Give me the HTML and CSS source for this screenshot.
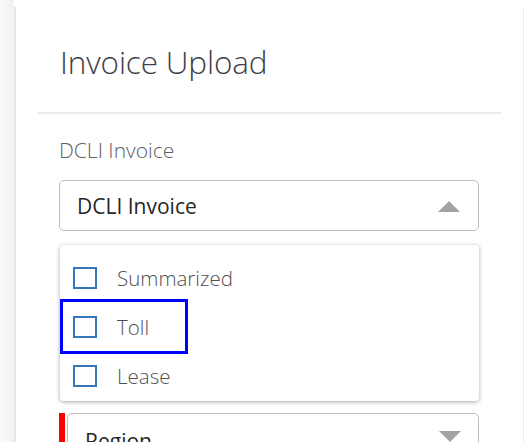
FILE: index.html
```html
<!DOCTYPE html>
<html lang="en">
<head>
<meta charset="utf-8">
<title>Invoice Upload</title>
<link rel="stylesheet" href="styles.css">
</head>
<body>
<div class="panel">
  <div class="header">
    <h1 class="title">Invoice Upload</h1>
  </div>
  <div class="divider"></div>
  <div class="content">
    <div class="field-label">DCLI Invoice</div>
    <div class="select open">
      <span class="select-value">DCLI Invoice</span>
      <span class="caret caret-up"></span>
    </div>
    <div class="dropdown">
      <label class="option"><span class="box"></span><span class="option-text">Summarized</span></label>
      <label class="option focused"><span class="box"></span><span class="option-text">Toll</span></label>
      <label class="option"><span class="box"></span><span class="option-text">Lease</span></label>
    </div>
    <div class="required">
      <div class="select region">
        <span class="select-value">Region</span>
        <span class="caret caret-down"></span>
      </div>
    </div>
  </div>
</div>
</body>
</html>
```

FILE: styles.css
```css
html, body {
  margin: 0;
  padding: 0;
  height: 100%;
  overflow: hidden;
}

body {
  background: linear-gradient(to right, #fbfbfb 0, #f1f1f1 13px, #ffffff 14px);
  font-family: "Open Sans", "Noto Sans", sans-serif;
  padding: 7px 0 0 14px;
  box-sizing: border-box;
}

.panel {
  width: 510px;
  height: 600px;
  background: #ffffff;
  border-left: 2px solid #e6e6e6;
  border-right: 1px solid #ececec;
  box-sizing: border-box;
}

.header {
  padding: 35px 0 0 44px;
  height: 105px;
  box-sizing: border-box;
}

.title {
  margin: 0;
  font-weight: 300;
  font-size: 31.5px;
  line-height: 40px;
  color: #3f3f4a;
  letter-spacing: -0.15px;
}

.divider {
  height: 2px;
  margin: 0 22px 0 21px;
  background: #ebebeb;
}

.content {
  padding: 24px 44px 0 43px;
}

.field-label {
  font-size: 21px;
  font-weight: 300;
  line-height: 24px;
  color: #606060;
  margin-bottom: 18px;
}

.select {
  position: relative;
  height: 51px;
  border: 1px solid #bfbfbf;
  border-radius: 5px;
  box-sizing: border-box;
  display: flex;
  align-items: center;
  padding: 0 17px;
  background: #fff;
}

.select-value {
  font-size: 21px;
  color: #262626;
  flex: 1;
}

.caret {
  width: 0;
  height: 0;
  border-left: 11.5px solid transparent;
  border-right: 11.5px solid transparent;
}

.caret-up {
  border-bottom: 11px solid #a3a3a3;
  margin: 2px 1px 0 0;
}

.caret-down {
  border-top: 11px solid #a3a3a3;
}

.dropdown {
  margin-top: 14px;
  height: 156px;
  border-radius: 4px;
  box-shadow: 0 1px 4px rgba(0, 0, 0, 0.35);
  padding-top: 8px;
  box-sizing: border-box;
  background: #fff;
  margin-left: 1px;
}

.option {
  display: flex;
  align-items: center;
  height: 49px;
  width: 122px;
  margin-left: 3px;
  padding-left: 10px;
  box-sizing: border-box;
}

.option.focused {
  outline: 3px solid #0000ff;
}

.box {
  width: 24px;
  height: 22px;
  border: 2px solid #3478bd;
  box-sizing: border-box;
  flex: none;
}

.option-text {
  margin-left: 20px;
  font-size: 20.5px;
  font-weight: 300;
  color: #4f4f4f;
  white-space: nowrap;
}

.required {
  margin-top: 12px;
  border-left: 6px solid #ff0000;
  padding-left: 2px;
}

.region {
  height: 60px;
  align-items: flex-start;
  padding-top: 13px;
}

.region .select-value {
  font-size: 21px;
}

.region .caret-down {
  margin-top: 4px;
}
```
